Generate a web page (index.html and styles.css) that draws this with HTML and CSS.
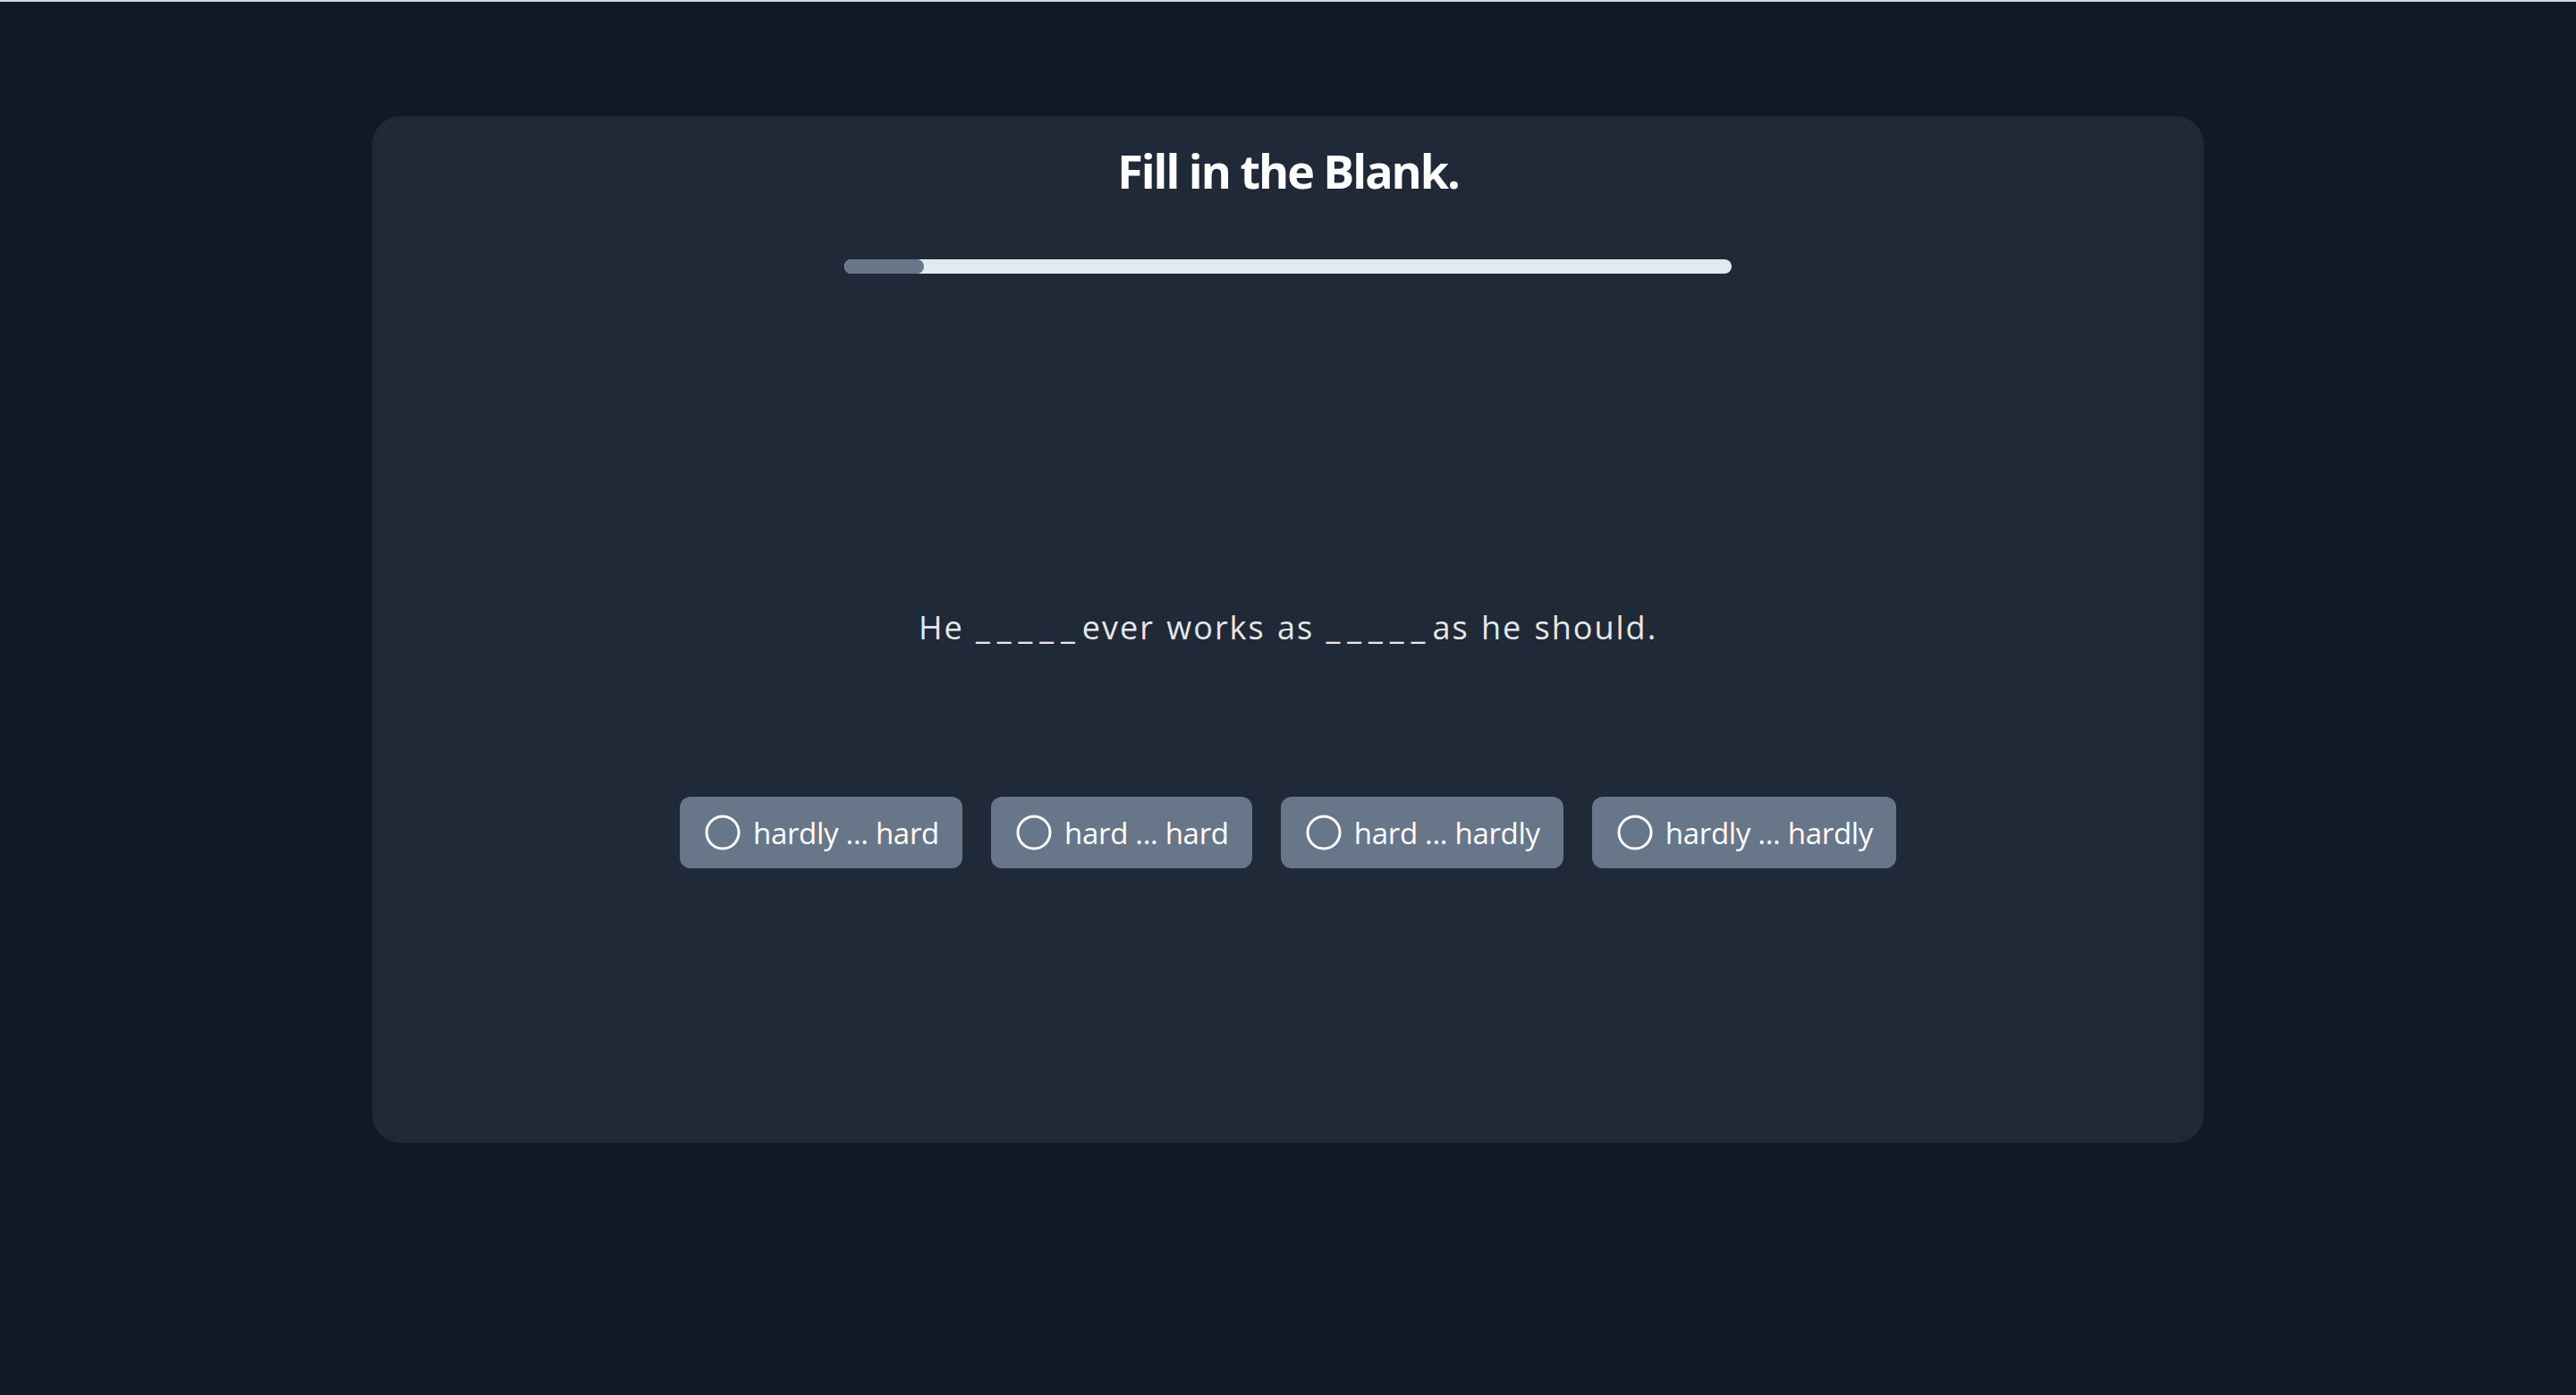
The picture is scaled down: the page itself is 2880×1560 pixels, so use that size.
FILE: index.html
```html
<!DOCTYPE html>
<html lang="en">
<head>
<meta charset="utf-8">
<title>Fill in the Blank.</title>
<link rel="stylesheet" href="styles.css">
</head>
<body>
<div class="topline"></div>
<main class="page">
  <section class="card">
    <h1 class="title">Fill in the Blank.</h1>
    <div class="progress"><div class="progress-fill" style="width: 9%"></div></div>
    <p class="sentence">He <span class="blank">_____</span>ever works as <span class="blank">_____</span>as he should.</p>
    <div class="options">
      <button class="option"><svg class="radio" viewBox="0 0 40 40"><circle cx="20" cy="20" r="18" /></svg><span>hardly ... hard</span></button>
      <button class="option"><svg class="radio" viewBox="0 0 40 40"><circle cx="20" cy="20" r="18" /></svg><span>hard ... hard</span></button>
      <button class="option"><svg class="radio" viewBox="0 0 40 40"><circle cx="20" cy="20" r="18" /></svg><span>hard ... hardly</span></button>
      <button class="option"><svg class="radio" viewBox="0 0 40 40"><circle cx="20" cy="20" r="18" /></svg><span>hardly ... hardly</span></button>
    </div>
  </section>
</main>
</body>
</html>
```
FILE: styles.css
```css
* { box-sizing: border-box; }
html, body {
  margin: 0;
  padding: 0;
  background: #111827;
  font-family: "Open Sans", "Noto Sans", sans-serif;
}
.topline {
  height: 2px;
  background: #d4d6da;
}
.page {
  display: flex;
  justify-content: center;
  padding-top: 128px;
  min-height: 1558px;
}
.card {
  width: 2048px;
  height: 1148px;
  background: #1f2937;
  border-radius: 32px;
  display: flex;
  flex-direction: column;
  align-items: center;
  padding-top: 20px;
}
.title {
  margin: 0;
  font-size: 52px;
  line-height: 81px;
  font-weight: 700;
  color: #ffffff;
  letter-spacing: -2px;
}
.progress {
  margin-top: 59px;
  width: 992px;
  height: 16px;
  border-radius: 8px;
  background: #e2e8f0;
  overflow: hidden;
}
.progress-fill {
  height: 100%;
  background: #68768a;
  border-radius: 8px;
}
.sentence {
  margin: 370px 0 0;
  font-size: 36px;
  line-height: 51px;
  font-weight: 400;
  color: #e5e7eb;
  letter-spacing: 2px;
  word-spacing: 2px;
}
.blank {
  letter-spacing: 8px;
}
.options {
  margin-top: 164px;
  display: flex;
  gap: 32px;
}
.option {
  height: 80px;
  display: flex;
  align-items: center;
  gap: 14px;
  padding: 0 26px 0 28px;
  border: none;
  border-radius: 12px;
  background: #68768a;
  color: #ffffff;
  font-family: "Open Sans", "Noto Sans", sans-serif;
  font-size: 33px;
  line-height: 1;
  letter-spacing: -0.3px;
  cursor: pointer;
}
.radio {
  width: 40px;
  height: 40px;
  flex: none;
}
.radio circle {
  fill: none;
  stroke: #ffffff;
  stroke-width: 3;
}
```
